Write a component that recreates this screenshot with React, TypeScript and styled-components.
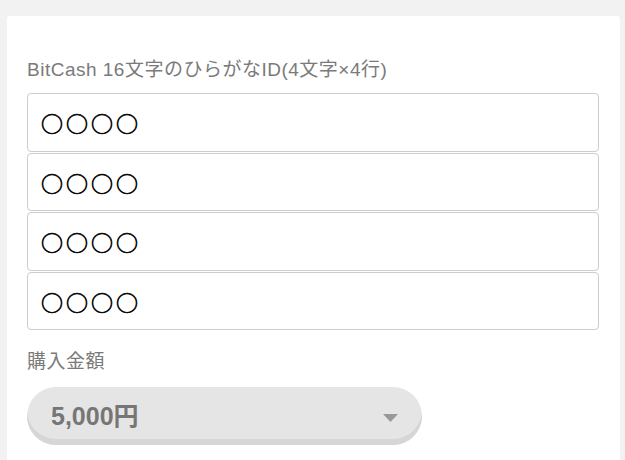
import React from "react";
import styled, { createGlobalStyle } from "styled-components";

const Global = createGlobalStyle`
  html, body {
    margin: 0;
    padding: 0;
    background: #f2f2f2;
  }
  body {
    font-family: "Liberation Sans", "Noto Sans CJK JP", sans-serif;
  }
`;

const Page = styled.div`
  padding: 16px 5px 0 7px;
  height: 444px;
  overflow: hidden;
`;

const Card = styled.div`
  background: #ffffff;
  border-radius: 3px;
  padding: 40px 21px 40px 20px;
  min-height: 500px;
  box-sizing: border-box;
`;

const Label = styled.div<{ $gap: number }>`
  font-size: 19px;
  line-height: 27px;
  letter-spacing: 0.5px;
  color: #7a7a7a;
  margin-bottom: ${(p) => p.$gap}px;
`;

const IdList = styled.div`
  display: flex;
  flex-direction: column;
  gap: 1px;
  margin-bottom: 18px;
`;

const IdInput = styled.input`
  display: block;
  box-sizing: border-box;
  width: 100%;
  height: 58.5px;
  margin: 0;
  padding: 0 12px 0 13px;
  border: 1px solid #cccccc;
  border-radius: 4px;
  background: #ffffff;
  font-family: "Noto Sans CJK JP", "Liberation Sans", sans-serif;
  font-size: 22px;
  letter-spacing: 3px;
  color: #000000;
  -webkit-text-stroke: 0.6px #000000;
  outline: none;
`;

const Select = styled.div`
  display: flex;
  align-items: center;
  justify-content: space-between;
  box-sizing: border-box;
  width: 395px;
  height: 58px;
  padding: 0 24px 0 24px;
  border-radius: 29px;
  background: #e5e5e5;
  box-shadow: inset 0 -6px 0 #d6d6d6;
`;

const SelectValue = styled.span`
  font-size: 25px;
  line-height: 25px;
  font-weight: 700;
  color: #767676;
`;

const Arrow = styled.svg`
  display: block;
  margin-top: 4px;
`;

const rows = ["○○○○", "○○○○", "○○○○", "○○○○"];

export default function App() {
  return (
    <>
      <Global />
      <Page>
        <Card>
          <Label $gap={10}>BitCash 16文字のひらがなID(4文字×4行)</Label>
          <IdList>
            {rows.map((r, i) => (
              <IdInput key={i} type="text" readOnly defaultValue={r} />
            ))}
          </IdList>
          <Label $gap={12}>購入金額</Label>
          <Select>
            <SelectValue>5,000円</SelectValue>
            <Arrow width="15" height="8" viewBox="0 0 15 8">
              <polygon points="0,0 15,0 7.5,8" fill="#999999" />
            </Arrow>
          </Select>
        </Card>
      </Page>
    </>
  );
}
